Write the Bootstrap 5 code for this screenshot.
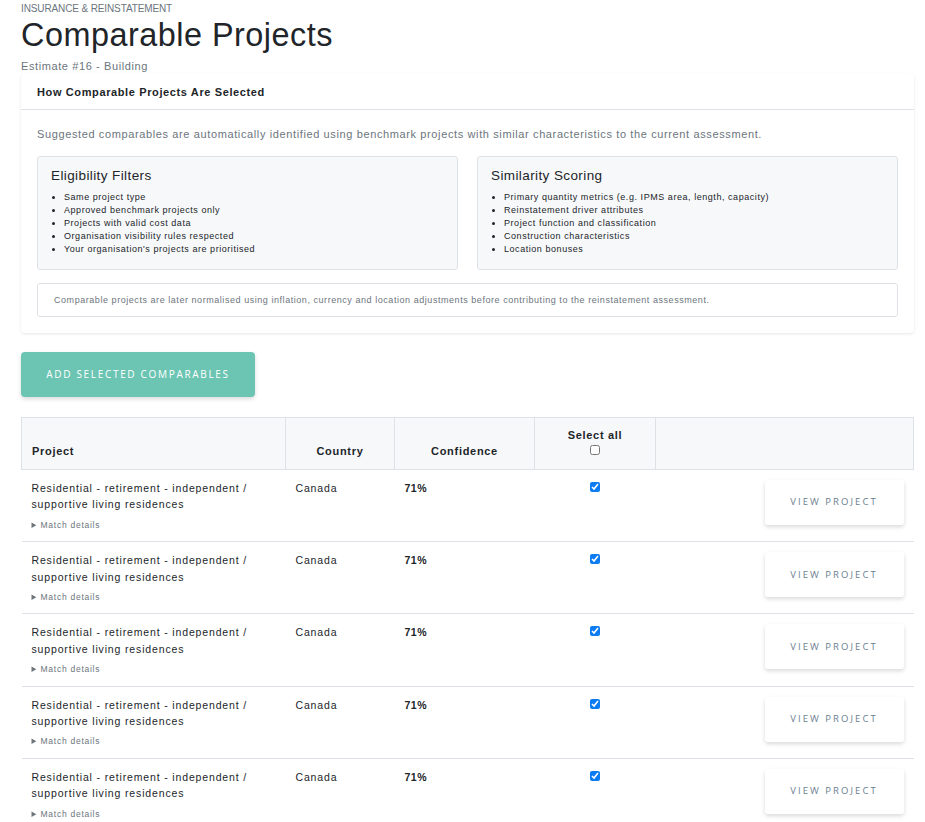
<!DOCTYPE html>
<html lang="en">
<head>
  <meta charset="UTF-8" />
  <title>Comparable Projects</title>
  <link href="https://cdn.jsdelivr.net/npm/bootstrap@5.3.3/dist/css/bootstrap.min.css" rel="stylesheet" />
  <style>
    html, body { overflow-x: hidden; }
    body { font-family: "Liberation Sans", Arial, sans-serif; color: #212529; letter-spacing: .5px; }
    .page-wrap { padding: 3px 11px 0 21px; }
    .eyebrow { font-size: 10px; line-height: 12px; color: #6c757d; letter-spacing: -.12px; }
    .page-title { font-size: 32.4px; line-height: 40px; font-weight: 400; letter-spacing: .5px; margin: 0 0 4px; }
    .page-sub { font-size: 11px; line-height: 14px; color: #6c757d; letter-spacing: .6px; font-weight: 500; }
    .info-card { border: 0; border-radius: 4px; box-shadow: 0 1px 3px rgba(0,0,0,.1); margin-top: 1px; }
    .info-card .card-header { background: #fff; padding: 0 16px; height: 36px; line-height: 36px; font-size: 11px; font-weight: 700; letter-spacing: .62px; border-bottom: 1px solid #dee2e6; }
    .info-card .card-body { padding: 17px 16px 16px; }
    .intro { font-size: 11px; line-height: 14px; color: #6c757d; letter-spacing: .62px; margin-bottom: 15px; }
    .rule-row { gap: 19px; }
    .rule-box { background: #f7f8fa; border: 1px solid #dee2e6; border-radius: 3px; padding: 12px 13px 0; height: 114px; }
    .rule-box h6 { font-size: 13.5px; line-height: 14px; font-weight: 400; margin: 0 0 8px; letter-spacing: .4px; }
    .rule-box ul { font-size: 9px; line-height: 13px; padding-left: 13px; margin: 0; letter-spacing: .55px; }
    .note-box { border: 1px solid #dee2e6; border-radius: 3px; font-size: 9px; line-height: 32px; height: 34px; padding: 0 16px; margin-top: 13px; color: #6c757d; letter-spacing: .55px; }
    .add-btn { background: #6cc5b2; border: 0; color: #fff; font-family: "Open Sans", sans-serif; font-size: 10px; letter-spacing: 1.68px; width: 234px; height: 45px; border-radius: 4px; box-shadow: 0 2px 4px rgba(0,0,0,.15); margin: 19px 0 20px; padding: 0; }
    .add-btn:hover { background: #6cc5b2; color: #fff; }
    .cmp-table { table-layout: fixed; width: 893px; margin: 0; border-collapse: collapse; }
    .col-project { width: 264px; }
    .col-country { width: 109px; }
    .col-conf { width: 140px; }
    .col-select { width: 121px; }
    .cmp-table th { background: #f7f8fa; border: 1px solid #dee2e6; font-size: 11px; line-height: 14px; font-weight: 700; vertical-align: bottom; padding: 0 10px 11px; height: 52px; letter-spacing: .7px; }
    .cmp-table th.select-head { padding-bottom: 14px; }
    .cmp-table td { border-bottom: 1px solid #dee2e6; font-size: 10.5px; line-height: 16.45px; letter-spacing: .85px; vertical-align: top; padding: 10px 10px 0; height: 72.2px; }
    .cmp-table td.pct { letter-spacing: .5px; }
    .details { font-size: 8.5px; line-height: 12px; color: #6c757d; margin-top: 6px; letter-spacing: .74px; }
    .details summary { cursor: pointer; }
    .details summary::marker { font-size: 8.5px; }
    .cmp-table input[type=checkbox] { width: 10px; height: 10px; margin: 2px auto 0; display: block; accent-color: #0d7cf2; }
    .cmp-table .select-head input[type=checkbox] { margin-top: 3px; }
    .view-btn { background: #fff; border: 0; color: #6b7f8f; font-family: "Open Sans", sans-serif; font-size: 9.5px; letter-spacing: 2.05px; width: 139px; height: 45px; box-shadow: 0 2px 4px rgba(0,0,0,.15); border-radius: 3px; padding: 0; }
  </style>
</head>
<body>
  <div class="page-wrap">
    <div class="eyebrow text-uppercase">Insurance &amp; Reinstatement</div>
    <h1 class="page-title">Comparable Projects</h1>
    <div class="page-sub">Estimate #16 - Building</div>

    <div class="card info-card">
      <div class="card-header">How Comparable Projects Are Selected</div>
      <div class="card-body">
        <p class="intro">Suggested comparables are automatically identified using benchmark projects with similar characteristics to the current assessment.</p>
        <div class="d-flex rule-row">
          <div class="rule-box flex-fill w-50">
            <h6>Eligibility Filters</h6>
            <ul>
              <li>Same project type</li>
              <li>Approved benchmark projects only</li>
              <li>Projects with valid cost data</li>
              <li>Organisation visibility rules respected</li>
              <li>Your organisation's projects are prioritised</li>
            </ul>
          </div>
          <div class="rule-box flex-fill w-50">
            <h6>Similarity Scoring</h6>
            <ul>
              <li>Primary quantity metrics (e.g. IPMS area, length, capacity)</li>
              <li>Reinstatement driver attributes</li>
              <li>Project function and classification</li>
              <li>Construction characteristics</li>
              <li>Location bonuses</li>
            </ul>
          </div>
        </div>
        <div class="note-box">Comparable projects are later normalised using inflation, currency and location adjustments before contributing to the reinstatement assessment.</div>
      </div>
    </div>

    <button class="btn add-btn text-uppercase d-block">Add selected comparables</button>

    <table class="cmp-table" id="cmpTable">
      <colgroup>
        <col class="col-project"><col class="col-country"><col class="col-conf"><col class="col-select"><col>
      </colgroup>
      <thead>
        <tr>
          <th>Project</th>
          <th class="text-center">Country</th>
          <th class="text-center">Confidence</th>
          <th class="text-center select-head">Select all<input type="checkbox"></th>
          <th></th>
        </tr>
      </thead>
      <tbody id="rows"></tbody>
    </table>
  </div>

  <script>
    const rows = document.getElementById('rows');
    for (let i = 0; i < 5; i++) {
      rows.innerHTML += `<tr>
        <td>Residential - retirement - independent / supportive living residences
          <details class="details"><summary>Match details</summary></details></td>
        <td>Canada</td>
        <td class="fw-bold pct">71%</td>
        <td><input type="checkbox" checked></td>
        <td class="text-end"><button class="btn view-btn text-uppercase">View project</button></td>
      </tr>`;
    }
  </script>
  <script src="https://cdn.jsdelivr.net/npm/bootstrap@5.3.3/dist/js/bootstrap.bundle.min.js"></script>
</body>
</html>
